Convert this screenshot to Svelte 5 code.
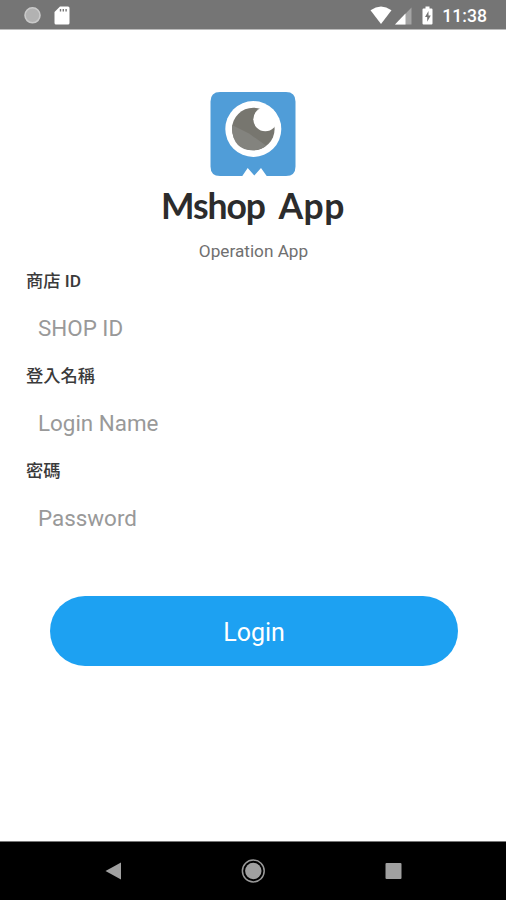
<script lang="ts">
    type Field = { id: string; label: string; hint: string; type: "text" | "password" };

    const fields: Field[] = [
        { id: "shop", label: "商店 ID", hint: "SHOP ID", type: "text" },
        { id: "name", label: "登入名稱", hint: "Login Name", type: "text" },
        { id: "password", label: "密碼", hint: "Password", type: "password" }
    ];

    let values: Record<string, string> = $state({ shop: "", name: "", password: "" });
</script>

<div class="screen">
    <header class="status-bar">
        <svg class="notices" width="50" height="22" viewBox="0 0 50 22">
            <circle cx="8.500" cy="11.300" r="7.500" fill="#b2b2b2" stroke="#cacaca" stroke-width="1.600" />
            <path d="M36 2.500h8q1.500 0 1.500 1.500v15q0 1.500-1.500 1.500h-12q-1.500 0-1.500-1.500V8z" fill="#fff" />
            <path d="M36.500 5v2.500M39.300 5v2.500M42.100 5v2.500" stroke="#777" stroke-width="1.400" />
        </svg>
        <svg width="66" height="22" viewBox="0 0 66 22">
            <path d="M0.500 6.200Q11 -1.200 21.500 6.200L11 20z" fill="#fff" />
            <path d="M41.500 3.500v17H25z" fill="#a4a4a4" />
            <path d="M35.500 9.500v11H25z" fill="#fff" />
            <path d="M55.500 2.500h4v2h2q1 0 1 1v14q0 1-1 1h-8q-1 0-1-1v-14q0-1 1-1h2z" fill="#fff" />
            <path d="M58.500 7l-3.500 6h2.200v4.800l3.600-6.200h-2.300z" fill="#757575" />
        </svg>
        <span class="clock">11:38</span>
    </header>

    <main>
        <svg class="logo" width="86" height="86" viewBox="0 0 86 86">
            <path d="M10 1h66q9.500 0 9.500 9.500v65q0 9.500-9.500 9.500H56.700L51 77l-6.700 7.500L37.700 77l-5.400 8H10q-9.500 0-9.500-9.500v-65Q.5 1 10 1z" fill="#509dd8" />
            <circle cx="43.300" cy="38" r="28" fill="#fff" />
            <circle cx="43.300" cy="38" r="21.300" fill="#77766f" />
            <path d="M22 34l17 8.500 17 12q-5 4.500-13 4.800-20 0-21-22z" fill="#83837e" />
            <circle cx="55.300" cy="28.300" r="12" fill="#fff" />
        </svg>
        <h1><span class="name">Mshop</span> <span class="kind">App</span></h1>
        <p class="subtitle">Operation App</p>

        <form onsubmit={(event) => event.preventDefault()}>
            {#each fields as field}
                <label for={field.id}>{field.label}</label>
                <input id={field.id} type={field.type} placeholder={field.hint} bind:value={values[field.id]} />
            {/each}
            <button>Login</button>
        </form>
    </main>

    <nav>
        <svg width="24" height="24" viewBox="0 0 24 24"><path d="M4.500 12L20 3.500v17z" fill="#a0a0a0" /></svg>
        <svg width="24" height="24" viewBox="0 0 24 24">
            <circle cx="12.300" cy="12" r="10.900" fill="none" stroke="#999" stroke-width="1.500" />
            <circle cx="12.300" cy="12" r="8.200" fill="#a0a0a0" />
        </svg>
        <svg width="24" height="24" viewBox="0 0 24 24"><rect x="4.500" y="4" width="16" height="16" rx="1" fill="#a0a0a0" /></svg>
    </nav>
</div>

<style>
    :global(body) {
        margin: 0;
        background: #fff;
    }

    .screen {
        height: 900px;
        display: flex;
        flex-direction: column;
        font-family: Roboto, "Noto Sans CJK TC", sans-serif;
        overflow: hidden;
    }

    .status-bar {
        height: 29px;
        flex-shrink: 0;
        display: flex;
        align-items: center;
        padding: 0 19px 0 24px;
        background: #757575;
        border-bottom: 1px solid #bcbcbc;
    }

    .notices {
        margin-right: auto;
    }

    .clock {
        margin-left: 6px;
        padding-top: 2px;
        color: #fff;
        font-size: 17.6px;
        font-weight: 500;
        line-height: 22px;
    }

    main {
        flex: 1;
        display: flex;
        flex-direction: column;
        align-items: center;
        padding-top: 61px;
    }

    .logo {
        flex-shrink: 0;
    }

    h1 {
        margin: 7px 0 0;
        color: #2c2c2c;
        font-family: Lato, sans-serif;
        font-size: 35.5px;
        font-weight: 700;
        line-height: 44px;
        word-spacing: 5px;
        white-space: nowrap;
    }

    .name {
        letter-spacing: -1.1px;
    }

    .kind {
        letter-spacing: 0.5px;
    }

    .subtitle {
        margin: 13px 0 0;
        padding-left: 1px;
        color: #707070;
        font-size: 17.2px;
        line-height: 20px;
    }

    form {
        width: 100%;
        box-sizing: border-box;
        display: flex;
        flex-direction: column;
        padding: 8px 26px 0;
    }

    label {
        height: 24px;
        color: #3a3a3a;
        font-size: 17.3px;
        font-weight: 500;
        line-height: 24px;
    }

    input {
        height: 71px;
        box-sizing: border-box;
        padding: 0 12px 2px;
        border: none;
        outline: none;
        background: none;
        color: #333;
        font-family: inherit;
        font-size: 22.4px;
    }

    input::placeholder {
        color: #999;
        opacity: 1;
    }

    button {
        height: 70px;
        margin: 42px 22px 0 24px;
        padding: 2px 0 0;
        border: none;
        border-radius: 35px;
        background: #1da1f2;
        color: #fff;
        font-family: inherit;
        font-size: 25px;
    }

    nav {
        height: 59px;
        box-sizing: border-box;
        flex-shrink: 0;
        display: flex;
        align-items: center;
        justify-content: space-between;
        padding: 0 101px 1px;
        background: #000;
        border-top: 1px solid #777;
    }
</style>
